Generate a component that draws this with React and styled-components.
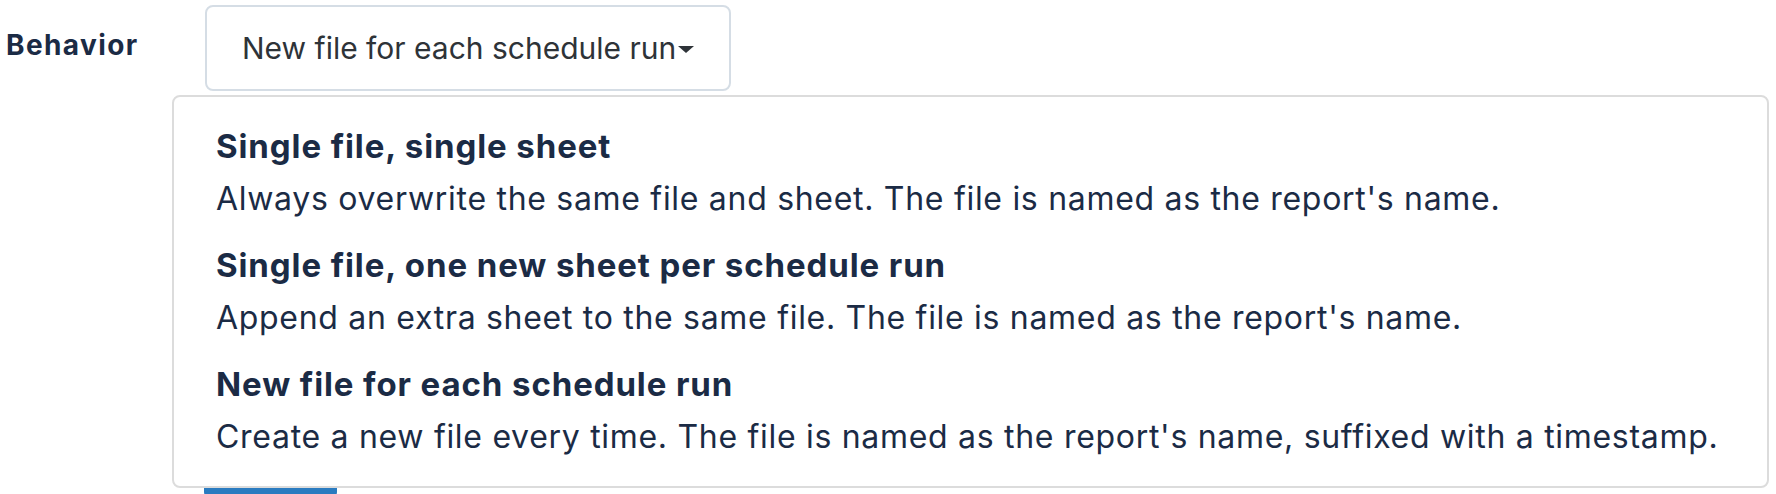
import React from "react";
import styled, { createGlobalStyle } from "styled-components";

const GlobalStyle = createGlobalStyle`
  body {
    margin: 0;
    background: #fff;
    font-family: Inter, "Noto Sans", "Liberation Sans", sans-serif;
  }
`;

const Page = styled.div`
  padding: 5px 0 0 6px;
  display: flex;
  flex-direction: column;
  gap: 349px;
`;

const FormRow = styled.div`
  display: flex;
  align-items: flex-start;
`;

const Label = styled.div`
  width: 199px;
  margin-top: 23px;
  font-size: 28px;
  line-height: 34px;
  font-weight: 700;
  letter-spacing: 1.4px;
  color: #1b2b45;
`;

const SelectWrap = styled.div`
  position: relative;
`;

const SelectButton = styled.button`
  box-sizing: border-box;
  width: 526px;
  height: 86px;
  padding: 0 0 0 35px;
  display: flex;
  align-items: center;
  background: #fff;
  border: 2px solid #d5dde5;
  border-radius: 8px;
  font-family: inherit;
  font-size: 30px;
  line-height: 36px;
  color: #2e3338;
  cursor: pointer;
`;

const Caret = styled.span`
  width: 0;
  height: 0;
  margin: 2px 0 0 2px;
  border-left: 8px solid transparent;
  border-right: 8px solid transparent;
  border-top: 7px solid #2e3338;
`;

const Menu = styled.ul`
  position: absolute;
  z-index: 10;
  top: calc(100% + 4px);
  left: -33px;
  box-sizing: border-box;
  width: 1597px;
  height: 393px;
  margin: 0;
  padding: 16px 0 15px 42px;
  list-style: none;
  background: #fff;
  border: 2px solid #dcdcdc;
  border-radius: 8px;
`;

const Option = styled.li`
  padding: 9px 0 9px;
  color: #1b2b45;
`;

const OptionTitle = styled.div`
  font-size: 33px;
  line-height: 48px;
  font-weight: 700;
  letter-spacing: 0.9px;
  margin-bottom: 5px;
`;

const OptionText = styled.div`
  font-size: 32px;
  line-height: 48px;
  font-weight: 400;
  letter-spacing: 0.7px;
`;

const PrimaryButton = styled.button`
  width: 133px;
  height: 56px;
  margin-left: 198px;
  border: none;
  border-radius: 4px;
  background: #2a7bc0;
`;

const options = [
  {
    title: "Single file, single sheet",
    text: "Always overwrite the same file and sheet. The file is named as the report's name.",
  },
  {
    title: "Single file, one new sheet per schedule run",
    text: "Append an extra sheet to the same file. The file is named as the report's name.",
  },
  {
    title: "New file for each schedule run",
    text: "Create a new file every time. The file is named as the report's name, suffixed with a timestamp.",
  },
];

const App = () => (
  <>
    <GlobalStyle />
    <Page>
      <FormRow>
        <Label>Behavior</Label>
        <SelectWrap>
          <SelectButton>
            New file for each schedule run
            <Caret />
          </SelectButton>
          <Menu>
            {options.map((o) => (
              <Option key={o.title}>
                <OptionTitle>{o.title}</OptionTitle>
                <OptionText>{o.text}</OptionText>
              </Option>
            ))}
          </Menu>
        </SelectWrap>
      </FormRow>
      <PrimaryButton aria-label="Save" />
    </Page>
  </>
);

export default App;
